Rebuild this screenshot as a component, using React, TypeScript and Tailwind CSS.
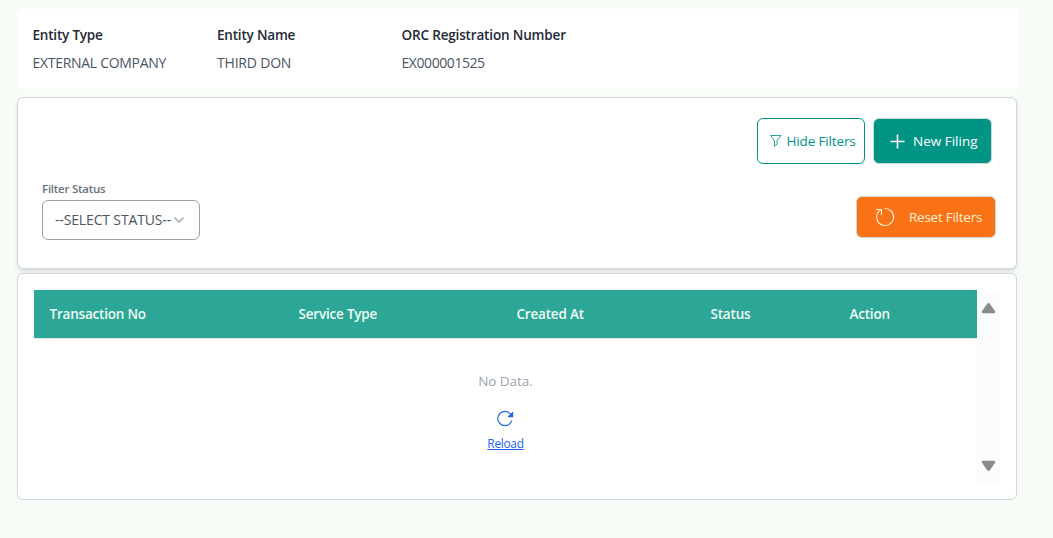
import React from "react";
import { IoReload } from "react-icons/io5";

const details = [
  { label: "Entity Type", value: "EXTERNAL COMPANY", labelStyle: "tracking-[-0.2px]", valueStyle: "tracking-[-0.3px]" },
  { label: "Entity Name", value: "THIRD DON", labelStyle: "tracking-[-0.2px]", valueStyle: "tracking-[-0.2px]" },
  { label: "ORC Registration Number", value: "EX000001525", labelStyle: "tracking-[-0.16px]", valueStyle: "tracking-[-0.43px]" },
];

const columns = [
  { name: "Transaction No", width: "w-[249px]" },
  { name: "Service Type", width: "w-[218px]" },
  { name: "Created At", width: "w-[194px]" },
  { name: "Status", width: "w-[139px]" },
  { name: "Action", width: "w-[100px]" },
];

export default function App() {
  return (
    <div className="h-[538px] overflow-hidden bg-[#f7fcf7] pl-[17px] pt-[9px] font-['Open_Sans','Noto_Sans',sans-serif] text-[13.5px] leading-5">
      <main className="w-[1000px]">
        <section className="flex h-20 rounded-l-md bg-white pl-[15.5px] pt-4">
          {details.map((d) => (
            <div key={d.label} className="w-[184.5px] shrink-0 whitespace-nowrap">
              <div className={`font-semibold text-[#1f2937] ${d.labelStyle}`}>{d.label}</div>
              <div className={`mt-2 text-[14px] text-[#4b5563] ${d.valueStyle}`}>{d.value}</div>
            </div>
          ))}
        </section>

        <section className="mt-2 h-[172px] rounded-md border border-gray-300 bg-white pl-6 pr-5 pt-5 shadow-md">
          <div className="flex justify-end gap-2 pr-1">
            <button className="flex h-[46px] w-[108px] items-center gap-[5px] whitespace-nowrap rounded-md border border-[#009485] pl-3 tracking-[-0.15px] text-[#009485]">
              <svg className="size-[11.5px] shrink-0" viewBox="0 0 12 12" fill="none" stroke="currentColor" strokeWidth="0.9">
                <path d="M.6 .5H11.4L7.4 5.8V9.7L4.6 11.5V5.8Z" />
              </svg>
              Hide Filters
            </button>
            <button className="flex h-[46px] w-[119px] items-center gap-2 whitespace-nowrap rounded-md border border-gray-300 bg-[#009485] pl-4 text-white">
              <svg className="size-[15px] shrink-0" viewBox="0 0 15 15" stroke="currentColor" strokeWidth="1.6">
                <path d="M7.5 .5v14M.5 7.5h14" />
              </svg>
              New Filing
            </button>
          </div>
          <div className="flex items-start justify-between">
            <div className="pt-[17px]">
              <div className="text-[11.5px] font-semibold leading-4 tracking-[-0.25px] text-[#6b7280]">Filter Status</div>
              <button className="mt-[3px] flex h-10 w-[158px] items-center whitespace-nowrap rounded-md border border-[#9ca3af] pl-3 text-[14px] text-[#4b5563]">
                <span className="tracking-[-0.15px]">--SELECT STATUS--</span>
                <svg className="ml-[3px] h-[6px] w-[10px] shrink-0 text-[#9ca3af]" viewBox="0 0 10 6" fill="none" stroke="currentColor" strokeWidth="1.3">
                  <path d="M.5 .5 5 5 9.5 .5" />
                </svg>
              </button>
            </div>
            <button className="mt-8 flex h-[42px] w-[140px] items-center gap-3.5 whitespace-nowrap rounded-md border border-gray-300 bg-[#f97316] pl-[18px] tracking-[-0.25px] text-orange-100">
              <svg className="size-5 shrink-0" viewBox="0 0 20 20" fill="none" stroke="currentColor" strokeWidth="1.1">
                <path d="M9.5 1.5A8.5 8.5 0 1 1 2.2 6.8Q3.4 4 6 2.5M1 2.5H6.5V8" />
              </svg>
              Reset Filters
            </button>
          </div>
        </section>

        <section className="mt-1 flex h-[227px] rounded-md border border-gray-300 bg-white pl-4 pt-4">
          <div className="w-[943px]">
            <div className="flex h-12 items-center bg-[#2ca697] pl-[15.5px] font-semibold text-[#effcf3]">
              {columns.map((c) => (
                <div key={c.name} className={`shrink-0 whitespace-nowrap tracking-[-0.2px] ${c.width}`}>{c.name}</div>
              ))}
            </div>
            <div className="flex flex-col items-center border-t border-gray-200 pt-8 text-[#9ca3af]">
              <div className="tracking-[-0.05px]">No Data.</div>
              <IoReload className="mt-[18px] size-[19px] text-[#2563eb]" />
              <a className="mt-2 text-[12px] leading-4 tracking-[-0.35px] text-[#2563eb] underline">Reload</a>
            </div>
          </div>
          <div className="flex h-[193px] w-[23px] flex-col items-center justify-between bg-[#fcfcfc] pb-[11px] pt-3 text-[#8b8b8b]">
            <svg className="h-3 w-[15px]" viewBox="0 0 16 12" fill="currentColor">
              <path d="M6.6 1.4Q8 0 9.4 1.4L15 9.5Q15.8 11.5 14 11.5H2Q.2 11.5 1 9.5Z" />
            </svg>
            <svg className="h-3 w-[15px]" viewBox="0 0 16 12" fill="currentColor">
              <path d="M6.6 10.6Q8 12 9.4 10.6L15 2.5Q15.8 .5 14 .5H2Q.2 .5 1 2.5Z" />
            </svg>
          </div>
        </section>
      </main>
    </div>
  );
}
